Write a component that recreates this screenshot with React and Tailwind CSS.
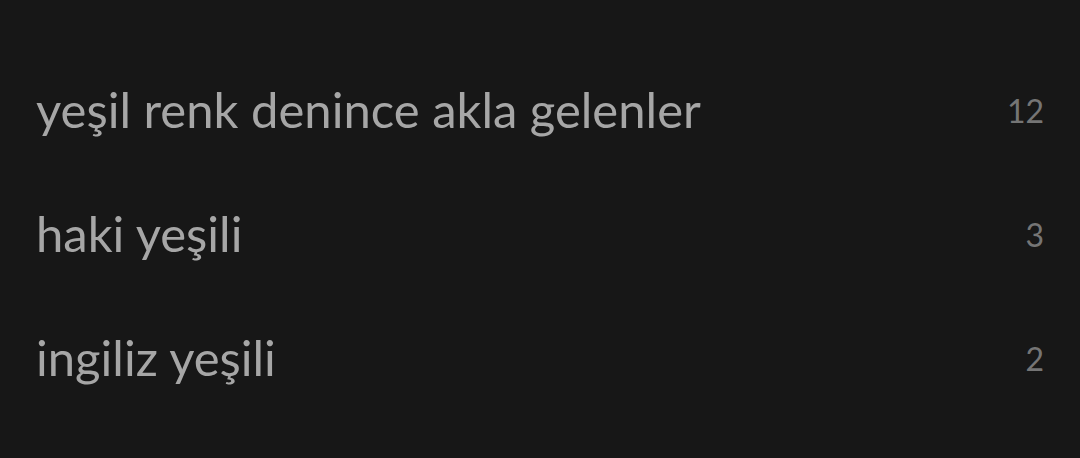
const items = [
  { title: 'yeşil renk denince akla gelenler', count: 12 },
  { title: 'haki yeşili', count: 3 },
  { title: 'ingiliz yeşili', count: 2 },
];

export default function App() {
  return (
    <div className="h-[458px] w-[1080px] bg-[#171717] pt-[48px] font-['Lato',sans-serif]">
      <ul>
        {items.map((item) => (
          <li key={item.title} className="flex h-[124px] items-center justify-between pl-[36px] pr-[36px] pb-[2px]">
            <span className="text-[49px] leading-none text-[#a6a6a6]">{item.title}</span>
            <span className="pt-[4px] text-[32px] leading-none text-[#757575]">{item.count}</span>
          </li>
        ))}
      </ul>
    </div>
  );
}
